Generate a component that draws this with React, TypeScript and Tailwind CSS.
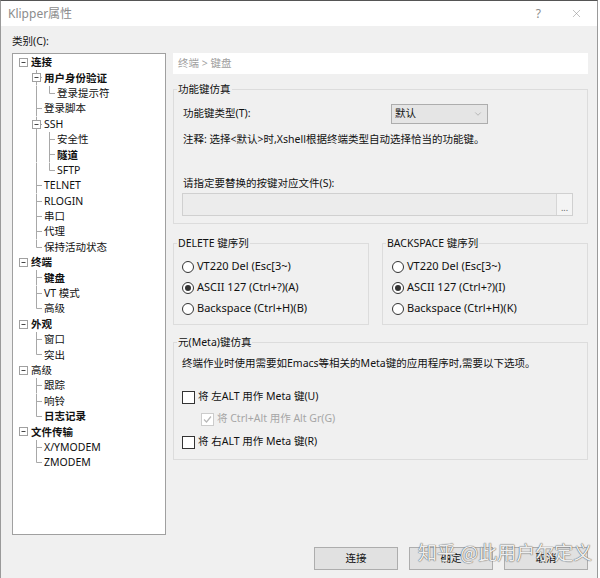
import { ChevronDown, X } from 'lucide-react';
import type { ReactNode } from 'react';

type TreeNode = { t: string; l: 0 | 1 | 2; exp?: boolean; b?: boolean; last?: boolean };

const tree: TreeNode[] = [
  { t: '连接', l: 0, exp: true, b: true },
  { t: '用户身份验证', l: 1, exp: true, b: true },
  { t: '登录提示符', l: 2, last: true },
  { t: '登录脚本', l: 1 },
  { t: 'SSH', l: 1, exp: true },
  { t: '安全性', l: 2 },
  { t: '隧道', l: 2, b: true },
  { t: 'SFTP', l: 2, last: true },
  { t: 'TELNET', l: 1 },
  { t: 'RLOGIN', l: 1 },
  { t: '串口', l: 1 },
  { t: '代理', l: 1 },
  { t: '保持活动状态', l: 1, last: true },
  { t: '终端', l: 0, exp: true, b: true },
  { t: '键盘', l: 1, b: true },
  { t: 'VT 模式', l: 1 },
  { t: '高级', l: 1, last: true },
  { t: '外观', l: 0, exp: true, b: true },
  { t: '窗口', l: 1 },
  { t: '突出', l: 1, last: true },
  { t: '高级', l: 0, exp: true },
  { t: '跟踪', l: 1 },
  { t: '响铃', l: 1 },
  { t: '日志记录', l: 1, last: true, b: true },
  { t: '文件传输', l: 0, exp: true, b: true },
  { t: 'X/YMODEM', l: 1 },
  { t: 'ZMODEM', l: 1, last: true },
];

// one 13px guide cell of the tree: vertical line, elbow dash, expander box
const Guide = ({ v = 'none', dash = false, box = false }: { v?: 'full' | 'top' | 'none'; dash?: boolean; box?: boolean }) => (
  <svg width="13" height="15.4" viewBox="0 0 13 15.4" className="shrink-0">
    {v !== 'none' && <line x1="6.5" y1="0" x2="6.5" y2={v === 'full' ? 15.4 : 7.5} stroke="#a8a8a8" />}
    {dash && <line x1="6.5" y1="7.5" x2="12" y2="7.5" stroke="#a8a8a8" />}
    {box && (
      <>
        <rect x="2.5" y="3.5" width="8" height="8" fill="#fff" stroke="#a0a0a0" />
        <line x1="4.5" y1="7.5" x2="8.5" y2="7.5" stroke="#444" />
      </>
    )}
  </svg>
);

const TreeRow = ({ n }: { n: TreeNode }) => (
  <div className="flex h-[15.4px] items-center">
    {n.l === 0 && <Guide box />}
    {n.l === 1 && (
      <>
        <Guide />
        <Guide v={n.last ? 'top' : 'full'} dash box={n.exp} />
      </>
    )}
    {n.l === 2 && (
      <>
        <Guide />
        <Guide v="full" />
        <Guide v={n.last ? 'top' : 'full'} dash />
      </>
    )}
    <span className={`ml-px whitespace-nowrap leading-[15px] ${n.b ? 'font-bold' : ''}`}>{n.t}</span>
  </div>
);

// windows group box; padding goes on the inner div so the legend stays put
const Group = ({ title, className = '', pad = '', children }: { title: string; className?: string; pad?: string; children: ReactNode }) => (
  <fieldset className={`min-w-0 border border-[#dcdcdc] ${className}`}>
    <legend className="ml-[3px] px-px leading-[16px]">{title}</legend>
    <div className={pad}>{children}</div>
  </fieldset>
);

const Radio = ({ on = false, label }: { on?: boolean; label: string }) => (
  <div className="flex h-[21px] items-center">
    <span className="flex h-[12px] w-[12px] items-center justify-center rounded-full border border-[#333] bg-white">
      {on && <span className="h-[6px] w-[6px] rounded-full bg-[#333]" />}
    </span>
    <span className="ml-[3px] whitespace-nowrap text-[11px]">{label}</span>
  </div>
);

const Check = ({ label, disabled = false, checked = false, className = '' }: { label: string; disabled?: boolean; checked?: boolean; className?: string }) => (
  <div className={`flex h-[20px] items-center ${className}`}>
    <span
      className={`flex h-[13px] w-[13px] items-center justify-center border ${
        disabled ? 'border-[#cccccc] bg-white' : 'border-[#333] bg-white'
      }`}
    >
      {checked && (
        <svg width="9" height="9" viewBox="0 0 9 9">
          <path d="M1 4.5 L3.5 7 L8 1.5" fill="none" stroke={disabled ? '#b8b8b8' : '#333'} strokeWidth="1.2" />
        </svg>
      )}
    </span>
    <span className={`ml-[3px] whitespace-nowrap ${disabled ? 'text-[#a6a6a6]' : ''}`}>{label}</span>
  </div>
);

const Btn = ({ label }: { label: string }) => (
  <button type="button" className="flex h-[23px] w-[84px] items-center justify-center border border-[#adadad] bg-[#e1e1e1] text-[10.5px] text-[#111]">
    {label}
  </button>
);

export default function App() {
  return (
    <div className="relative h-[578px] w-[600px] overflow-hidden bg-white font-['Noto_Sans','Noto_Sans_CJK_SC',sans-serif] text-[10.5px] text-[#111]">
      <div className="flex h-[578px] w-[598px] flex-col border-x border-t border-x-[#9a9a9a] border-t-[#555] bg-[#f0f0f0]">
        {/* title bar */}
        <div className="flex h-[25px] shrink-0 items-center bg-white pl-[7px] pr-[14px]">
          <span className="flex-1 text-[12px] text-[#8c8c8c]">Klipper属性</span>
          <span className="text-[12px] text-[#8c8c8c]">?</span>
          <X className="ml-[29px] text-[#8c8c8c]" size={13} strokeWidth={1} />
        </div>

        <div className="flex flex-1 flex-col pl-[11px] pr-[9px] pt-[7px]">
          <div className="leading-[16px]">类别(C):</div>

          <div className="mt-[4px] flex gap-[7px]">
            {/* category tree */}
            <div className="h-[482px] w-[154px] shrink-0 overflow-hidden border border-[#a0a0a0] bg-white pl-[4px] pt-px">
              {tree.map((n, i) => (
                <TreeRow key={i} n={n} />
              ))}
            </div>

            {/* settings panel */}
            <div className="flex w-[415px] flex-col">
              <div className="flex h-[21px] items-center bg-white pl-[5px] text-[#a0a0a0]">终端 &gt; 键盘</div>

              <Group title="功能键仿真" className="mt-[7px]" pad="px-[8px] pb-[7px]">
                <div className="mt-[7px] flex h-[20px] items-center">
                  <span className="w-[209px] pl-px">功能键类型(T):</span>
                  <div className="flex h-[20px] w-[97px] items-center justify-between border border-[#adadad] bg-[#e5e5e5] pl-[3px] pr-[4px]">
                    <span>默认</span>
                    <ChevronDown size={10} strokeWidth={1.2} className="text-[#888]" />
                  </div>
                </div>
                <div className="mt-[7px] pl-px leading-[16px]">注释: 选择&lt;默认&gt;时,Xshell根据终端类型自动选择恰当的功能键。</div>
                <div className="mt-[28px] pl-px leading-[16px]">请指定要替换的按键对应文件(S):</div>
                <div className="mt-[2px] flex h-[23px] w-[391px] justify-end border border-[#d0d0d0] bg-[#ececec]">
                  <div className="flex w-[16px] items-end justify-center border-l border-[#d6d6d6] bg-[#f4f4f4] pb-[2px] text-[9px] leading-[10px] text-[#666]">
                    ...
                  </div>
                </div>
              </Group>

              <div className="mt-[11px] flex gap-[13px]">
                <Group title="DELETE 键序列" className="w-[196px]" pad="pb-[5px] pl-[8px]">
                  <div className="mt-[5px]">
                    <Radio label="VT220 Del (Esc[3~)" />
                    <Radio on label="ASCII 127 (Ctrl+?)(A)" />
                    <Radio label="Backspace (Ctrl+H)(B)" />
                  </div>
                </Group>
                <Group title="BACKSPACE 键序列" className="w-[206px]" pad="pb-[5px] pl-[9px]">
                  <div className="mt-[5px]">
                    <Radio label="VT220 Del (Esc[3~)" />
                    <Radio on label="ASCII 127 (Ctrl+?)(I)" />
                    <Radio label="Backspace (Ctrl+H)(K)" />
                  </div>
                </Group>
              </div>

              <Group title="元(Meta)键仿真" className="mt-[9px]" pad="px-[8px] pb-[7px]">
                <div className="mt-[5px] leading-[16px]">终端作业时使用需要如Emacs等相关的Meta键的应用程序时,需要以下选项。</div>
                <Check className="mt-[16px]" label="将 左ALT 用作 Meta 键(U)" />
                <Check className="ml-[19px] mt-[2px]" disabled checked label="将 Ctrl+Alt 用作 Alt Gr(G)" />
                <Check className="mt-[3px]" label="将 右ALT 用作 Meta 键(R)" />
              </Group>
            </div>
          </div>

          <div className="mt-[12px] flex justify-end gap-[11px]">
            <Btn label="连接" />
            <Btn label="确定" />
            <Btn label="取消" />
          </div>
        </div>
      </div>

      {/* site watermark over the buttons */}
      <div className="pointer-events-none absolute left-[418px] top-[540px] whitespace-nowrap font-['Noto_Sans_CJK_SC',sans-serif] text-[19px] leading-[24px] text-white/90 [text-shadow:0_0_1px_#555,0_0_1px_#555]">
        知乎 @此用户尔定义
      </div>
    </div>
  );
}
